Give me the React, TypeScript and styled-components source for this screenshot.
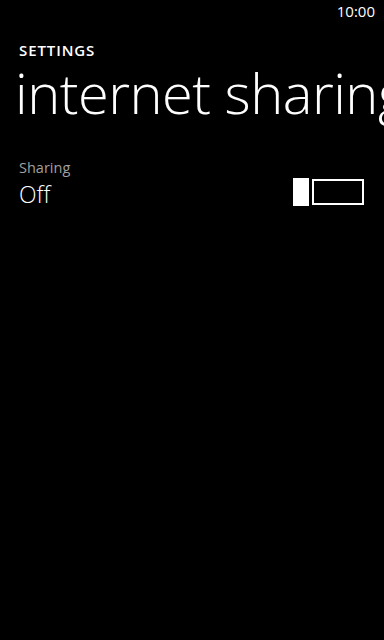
import React, { useState } from 'react'
import styled, { createGlobalStyle } from 'styled-components'

const GlobalStyle = createGlobalStyle`
    html, body {
        margin: 0;
        padding: 0;
        background: #000;
        overflow: hidden;
    }
    body {
        font-family: 'Open Sans', 'Noto Sans', sans-serif;
        color: #fff;
    }
`

export default function App() {
    const [sharing, setSharing] = useState(false)

    return (
        <Screen>
            <GlobalStyle />
            <StatusBar>
                <Clock>10:00</Clock>
            </StatusBar>
            <Header>
                <AppTitle>SETTINGS</AppTitle>
                <PageTitle>internet sharing</PageTitle>
            </Header>
            <Content>
                <SettingRow>
                    <SettingText>
                        <SettingLabel>Sharing</SettingLabel>
                        <SettingValue>{sharing ? 'On' : 'Off'}</SettingValue>
                    </SettingText>
                    <Toggle onClick={() => setSharing(!sharing)}>
                        <Thumb />
                        <Track $on={sharing} />
                    </Toggle>
                </SettingRow>
            </Content>
        </Screen>
    )
}

const Screen = styled.div`
    width: 384px;
    height: 640px;
    background: #000;
    overflow: hidden;
    display: flex;
    flex-direction: column;
`

const StatusBar = styled.div`
    height: 24px;
    display: flex;
    justify-content: flex-end;
    align-items: center;
    padding-right: 9px;
`

const Clock = styled.span`
    font-size: 15px;
    line-height: 24px;
    margin-top: -2px;
`

const Header = styled.div`
    padding-left: 19px;
    margin-top: 16px;
    white-space: nowrap;
`

const AppTitle = styled.div`
    font-size: 15px;
    font-weight: 600;
    line-height: 20px;
    letter-spacing: 0.9px;
`

const PageTitle = styled.div`
    font-size: 56px;
    font-weight: 300;
    line-height: 64px;
    margin-left: -4px;
    letter-spacing: -0.5px;
`

const Content = styled.div`
    padding: 0 20px 0 19px;
    margin-top: 34px;
`

const SettingRow = styled.div`
    display: flex;
    justify-content: space-between;
    align-items: flex-end;
`

const SettingText = styled.div`
    display: flex;
    flex-direction: column;
`

const SettingLabel = styled.div`
    font-size: 14.5px;
    line-height: 20px;
    color: #a0a0a0;
`

const SettingValue = styled.div`
    font-size: 23px;
    line-height: 30px;
    font-weight: 300;
    margin-top: 1px;
`

const Toggle = styled.div`
    display: flex;
    align-items: center;
    gap: 3px;
    margin-bottom: 3px;
    cursor: pointer;
`

const Thumb = styled.div`
    width: 16px;
    height: 28px;
    background: #fff;
`

const Track = styled.div<{ $on: boolean }>`
    width: 48px;
    height: 22px;
    border: 2px solid #fff;
    background: ${(p) => (p.$on ? '#1ba1e2' : 'transparent')};
`
